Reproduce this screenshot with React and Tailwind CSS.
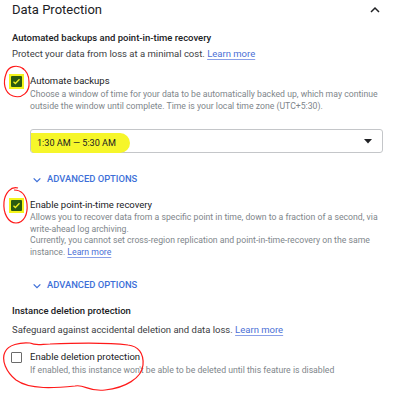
import React from 'react';

const font = { fontFamily: 'Roboto, "Liberation Sans", sans-serif' };

const Check = ({ checked }) =>
  checked ? (
    <span className="flex h-[15px] w-[15px] items-center justify-center bg-[#f4f41c]">
      <span className="flex h-[11px] w-[11px] items-center justify-center rounded-[1px] bg-[#2b5a12]">
        <svg width="9" height="9" viewBox="0 0 24 24">
          <path d="M4 12.5l5 5L20 6" fill="none" stroke="#f0f020" strokeWidth="3.5" />
        </svg>
      </span>
    </span>
  ) : (
    <span className="flex h-[15px] w-[15px] items-center justify-center">
      <span className="h-[11px] w-[11px] rounded-[1px] border-[1.5px] border-[#6b6b6b]" />
    </span>
  );

const LearnMore = () => (
  <span className="text-[#4a6fd6] underline decoration-[#8aa0e8] underline-offset-2">Learn more</span>
);

const Advanced = ({ className }) => (
  <div className={`flex h-[13px] items-center gap-[5px] pl-[32px] text-[9.4px] font-medium text-[#3d6fd8] ${className}`}>
    <svg width="10" height="10" viewBox="0 0 24 24">
      <path d="M4 8l8 8 8-8" fill="none" stroke="#3d6fd8" strokeWidth="3" />
    </svg>
    <span>ADVANCED OPTIONS</span>
  </div>
);

export default function App() {
  return (
    <div className="relative h-[400px] w-[397px] overflow-hidden bg-white" style={font}>
      <div className="flex h-[20px] items-center justify-between pl-[12px] pr-[16px]">
        <h1 className="text-[13px] leading-[20px] text-[#202124]">Data Protection</h1>
        <svg width="12" height="12" viewBox="0 0 24 24">
          <path d="M4 16l8-8 8 8" fill="none" stroke="#202124" strokeWidth="3" />
        </svg>
      </div>

      <div className="mt-[11px] pl-[12px] text-[9.5px] font-medium leading-[14px] text-[#202124]">
        Automated backups and point-in-time recovery
      </div>
      <div className="mt-[2px] pl-[12px] text-[9.5px] leading-[14px] text-[#3c4043]">
        Protect your data from loss at a minimal cost. <LearnMore />
      </div>

      <div className="mt-[13px] flex gap-[6px] pl-[9px]">
        <div className="pt-[0px]">
          <Check checked />
        </div>
        <div>
          <div className="text-[9.5px] leading-[14px] text-[#202124]">Automate backups</div>
          <div className="pr-[12px] text-[8.7px] leading-[12px] text-[#80868b]">
            Choose a window of time for your data to be automatically backed up, which may continue
            outside the window until complete. Time is your local time zone (UTC+5:30).
          </div>
        </div>
      </div>

      <div className="ml-[30px] mr-[14px] mt-[17px] flex h-[24px] items-center justify-between rounded-[3px] border border-[#c4c6c9] pr-[10px]">
        <span className="mt-[4px] rounded-r-[10px] rounded-bl-[4px] bg-[#f6f62a] py-[4px] pl-[6px] pr-[14px] text-[9.1px] leading-[12px] text-[#202124]">
          1:30 AM — 5:30 AM
        </span>
        <svg width="8" height="5" viewBox="0 0 8 5">
          <path d="M0 0h8L4 4.5z" fill="#202124" />
        </svg>
      </div>

      <Advanced className="mt-[20px]" />

      <div className="mt-[12px] flex gap-[6px] pl-[9px]">
        <div className="pt-[0px]">
          <Check checked />
        </div>
        <div>
          <div className="text-[9.5px] leading-[14px] text-[#202124]">Enable point-in-time recovery</div>
          <div className="pr-[12px] text-[8.7px] leading-[11.5px] text-[#80868b]">
            Allows you to recover data from a specific point in time, down to a fraction of a second, via
            write-ahead log archiving.
          </div>
          <div className="pr-[24px] text-[8.7px] leading-[11.5px] text-[#80868b]">
            Currently, you cannot set cross-region replication and point-in-time-recovery on the same
            instance. <LearnMore />
          </div>
        </div>
      </div>

      <Advanced className="mt-[21px]" />

      <div className="mt-[12px] pl-[12px] text-[9.5px] font-medium leading-[14px] text-[#202124]">
        Instance deletion protection
      </div>
      <div className="mt-[5px] pl-[12px] text-[9.5px] leading-[14px] text-[#3c4043]">
        Safeguard against accidental deletion and data loss. <LearnMore />
      </div>

      <div className="mt-[13px] flex gap-[6px] pl-[9px]">
        <div className="pt-[0px]">
          <Check />
        </div>
        <div>
          <div className="text-[9.5px] leading-[14px] text-[#202124]">Enable deletion protection</div>
          <div className="text-[8.7px] leading-[12px] text-[#80868b]">
            If enabled, this instance won't be able to be deleted until this feature is disabled
          </div>
        </div>
      </div>

      {/* hand-drawn red marks */}
      <svg className="pointer-events-none absolute left-0 top-0" width="397" height="400">
        <g fill="none" stroke="#ff1a1a" strokeWidth="1.2">
          <path d="M24 69 C17 64 8 66 6 74 C3 82 4 93 13 96 C22 99 30 92 29 82 C29 76 27 71 22 68" />
          <path d="M18 188 C11 186 5 193 4 202 C3 213 8 223 16 223 C24 223 28 214 27 204 C26 196 22 190 14 190" />
          <path d="M30 343 C20 342 8 345 5 352 C1 360 6 372 16 380 C30 390 55 388 75 386 C85 384 88 392 105 390 C125 388 142 378 143 365 C144 353 138 346 128 345 C105 342 75 343 50 344 C42 344 36 346 30 343" />
        </g>
      </svg>
    </div>
  );
}
